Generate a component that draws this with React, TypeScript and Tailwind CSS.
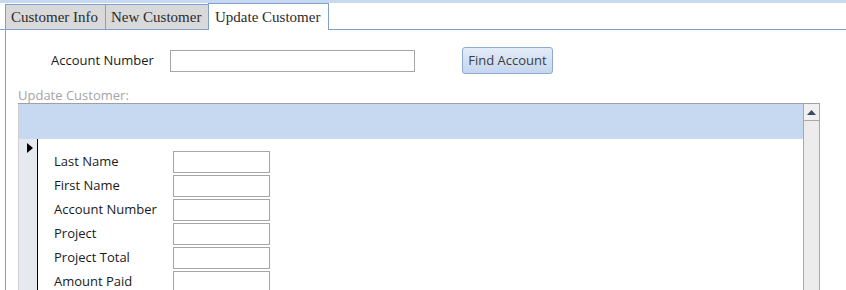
import React from "react";

const serif = { fontFamily: '"Liberation Serif", "DejaVu Serif", serif' };
const sans = { fontFamily: '"Open Sans", "Noto Sans", sans-serif' };

function Tab({ label, active, w }: { label: string; active?: boolean; w: string }) {
  if (active) {
    return (
      <div
        className={`${w} h-[27px] -mb-px border border-b-0 border-[#7f9fcf] bg-white pl-[6px] text-[15px] leading-[26px] text-[#2b2b2b] whitespace-nowrap`}
        style={serif}
      >
        {label}
      </div>
    );
  }
  return (
    <div
      className={`${w} h-[25px] border border-b-0 border-[#7f9fcf] bg-[#d9d9d9] pl-[5px] text-[15px] leading-[24px] text-[#2b2b2b] -mr-px whitespace-nowrap`}
      style={serif}
    >
      {label}
    </div>
  );
}

const fields = ["Last Name", "First Name", "Account Number", "Project", "Project Total", "Amount Paid"];

export default function App() {
  return (
    <div className="w-[846px] h-[290px] bg-white overflow-hidden flex flex-col">
      <div className="h-[3px] bg-[#c6d9f0] shrink-0" />
      <div className="flex items-end h-[27px] pl-[5px] border-b border-[#7f9fcf] shrink-0">
        <Tab label="Customer Info" w="w-[101px]" />
        <Tab label="New Customer" w="w-[104px]" />
        <Tab label="Update Customer" active w="w-[121px]" />
      </div>
      <div className="flex-1 ml-[5px] border-l border-[#7f9fcf] pl-[12px] pt-[17px]" style={sans}>
        <div className="flex items-center h-[27px]">
          <div className="w-[152px] pl-[33px] text-[13px] text-[#1a1a1a] whitespace-nowrap">Account Number</div>
          <div className="w-[245px] h-[22px] border border-[#a6a6a6] bg-white" />
          <button
            className="ml-[47px] w-[91px] h-[27px] rounded-[3px] border border-[#8fa9d3] bg-gradient-to-b from-[#e3ecf8] to-[#c5d6ee] text-[13px] text-[#3d3d3d]"
            style={sans}
          >
            Find Account
          </button>
        </div>
        <div className="mt-[14px] h-[15px] text-[13px] leading-[15px] text-[#a5a5a5]">Update Customer:</div>
        <div className="w-[802px] border-t border-[#a0a0a0] flex h-[200px]">
          <div className="flex-1 flex flex-col border-l border-[#d0d0d0]">
            <div className="h-[35px] bg-[#c6d9f0]" />
            <div className="flex flex-1">
              <div className="w-[19px] bg-[#e6e9ef] border-r border-black pt-[4px] pl-[8px]">
                <svg width="6" height="10" viewBox="0 0 6 10" className="block">
                  <path d="M0 0 L6 5 L0 10 Z" fill="#000" />
                </svg>
              </div>
              <div className="pl-[16px] pt-[12px] flex flex-col gap-[2px]">
                {fields.map((f) => (
                  <div key={f} className="flex items-center h-[22px]">
                    <div className="w-[119px] text-[13px] leading-[18px] -mt-[2px] text-[#1a1a1a] whitespace-nowrap">{f}</div>
                    <div className="w-[97px] h-[22px] border border-[#a6a6a6] bg-white" />
                  </div>
                ))}
              </div>
            </div>
          </div>
          <div className="w-[17px] flex flex-col bg-[#ececec] border-x border-[#a8a8a8]">
            <div className="h-[17px] border-b border-[#a8a8a8] bg-[#f0f0f0] flex items-center justify-center">
              <svg width="9" height="5" viewBox="0 0 9 5">
                <path d="M4.5 0 L9 5 L0 5 Z" fill="#3b4a6b" />
              </svg>
            </div>
            <div className="flex-1" />
          </div>
        </div>
      </div>
    </div>
  );
}
